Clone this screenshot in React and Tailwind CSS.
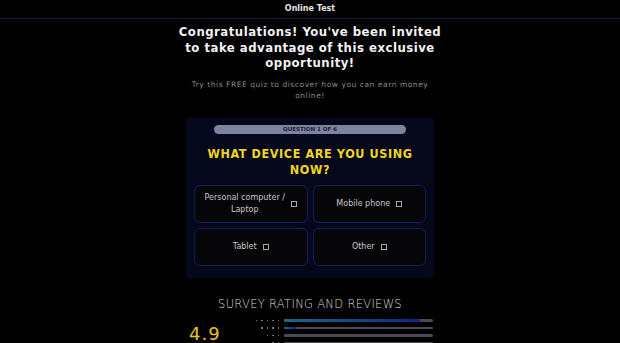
export default function App() {
  const options = ['Personal computer / Laptop', 'Mobile phone', 'Tablet', 'Other'];
  const ratings = [
    { dots: 5, fill: 91 },
    { dots: 4, fill: 8 },
    { dots: 3, fill: 0 },
    { dots: 2, fill: 0 },
  ];

  return (
    <div className="min-h-[343px] overflow-hidden bg-black text-white" style={{ fontFamily: '"DejaVu Sans", Verdana, sans-serif' }}>
      <header className="flex h-[19px] items-center justify-center border-b border-[#141a33] text-[8px] font-bold text-[#e5e5e5]">
        Online Test
      </header>

      <main className="mx-auto flex w-[270px] flex-col items-center">
        <h1
          className="mt-[5px] text-center text-[13px] font-bold leading-[15.5px] tracking-[0.5px] text-[#f2f2f2]"
          style={{ fontFamily: '"DejaVu Sans Condensed", "DejaVu Sans", sans-serif' }}
        >
          Congratulations! You've been invited to take advantage of this exclusive opportunity!
        </h1>
        <p className="mt-[8px] w-[250px] text-center text-[7.5px] leading-[11px] tracking-[0.55px] text-[#8a8a8a]">
          Try this FREE quiz to discover how you can earn money online!
        </p>

        <section className="mt-[16px] w-[248px] rounded-[3px] bg-[#05081a] px-[8px] pb-[12px] pt-[8px]">
          <div className="mx-auto flex h-[9px] w-[192px] items-center justify-center rounded-full bg-[#7d829f] text-[5.5px] font-bold text-[#1a1d2e]">
            QUESTION 1 OF 6
          </div>
          <h2
            className="mt-[12px] text-center text-[12.5px] font-bold leading-[16px] tracking-[0.6px] text-[#f0d61a]"
            style={{ fontFamily: '"DejaVu Sans Condensed", "DejaVu Sans", sans-serif' }}
          >
            WHAT DEVICE ARE YOU USING NOW?
          </h2>
          <div className="mt-[7px] grid grid-cols-2 gap-[5px]">
            {options.map((label) => (
              <button
                key={label}
                className="flex h-[38px] items-center justify-center gap-[6px] rounded-[6px] border border-[#0d1f5c] bg-[#060609] px-[8px] text-[8px] leading-[11.5px] text-[#c8c8c8]"
              >
                <span className="text-center">{label === options[0] ? <>Personal computer /<br />Laptop</> : label}</span>
                <span className="h-[6px] w-[6px] shrink-0 border border-[#a8a8a8]" />
              </button>
            ))}
          </div>
        </section>

        <h3 className="mt-[18px] text-[11.5px] font-light tracking-[0.3px] text-[#d6d6d6]">
          SURVEY RATING AND REVIEWS
        </h3>
      </main>

      <div className="mx-auto flex w-[246px] items-start gap-[5px] pl-[2px] pt-[4px]">
        <div className="w-[60px] pt-[8px] text-[18px] leading-none tracking-[1px] text-[#e6c51c]">4.9</div>
        <div className="flex flex-1 flex-col">
          {ratings.map((r) => (
            <div key={r.dots} className="flex h-[7.5px] items-center gap-[5px]">
              <div className="flex w-[25px] justify-end gap-[4px]">
                {Array.from({ length: r.dots }).map((_, i) => (
                  <span key={i} className="h-[1.5px] w-[1.5px] bg-[#7a7a7a]" />
                ))}
              </div>
              <div className="h-[2.5px] flex-1 rounded-full bg-[#4a4b52]">
                <div
                  className="h-full rounded-full bg-gradient-to-r from-[#1b6b86] to-[#102580]"
                  style={{ width: `${r.fill}%` }}
                />
              </div>
            </div>
          ))}
        </div>
      </div>
    </div>
  );
}
